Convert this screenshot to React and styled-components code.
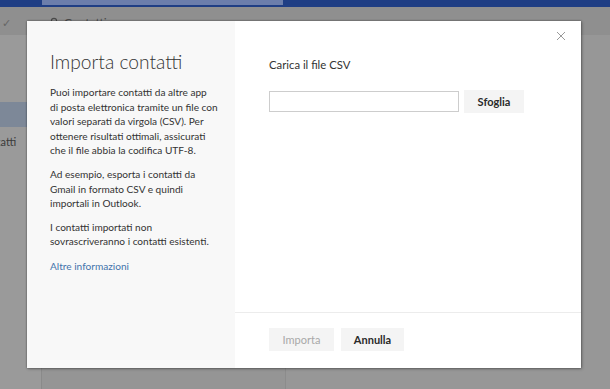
import styled, { createGlobalStyle } from "styled-components";

const GlobalStyle = createGlobalStyle`
  html, body {
    margin: 0;
    padding: 0;
    background-color: #989898;
  }

  body {
    font-family: Lato, "Open Sans", sans-serif;
    color: #333333;
  }
`;

const Page = styled.div`
  position: relative;
  width: 610px;
  height: 389px;
  overflow: hidden;
  display: flex;
  flex-direction: column;
  background-color: #989898;
`;

const TopBar = styled.div`
  height: 7px;
  flex-shrink: 0;
  background-color: #1f3e84;
  padding-left: 42px;
`;

const SearchStrip = styled.div`
  width: 241px;
  height: 5px;
  background-color: #6c7eab;
`;

const AppHeader = styled.div`
  height: 28px;
  flex-shrink: 0;
  display: flex;
  align-items: center;
  padding-top: 3px;
  box-sizing: border-box;
  background-color: #8f8f8f;
  color: #555555;
  font-size: 12px;
`;

const HeaderCheck = styled.span`
  width: 47px;
  padding-left: 2px;
  font-size: 11px;
  color: #666666;
`;

const HeaderTitle = styled.span`
  display: flex;
  align-items: center;
  gap: 5px;
  color: #4a4a4a;
`;

const Workspace = styled.div`
  flex: 1;
  display: flex;
`;

const Sidebar = styled.div`
  width: 41px;
  flex-shrink: 0;
  border-right: 1px solid #8a8a8a;
  background-color: #9a9a9a;
  padding-top: 67px;
  overflow: hidden;
`;

const SidebarItem = styled.div`
  height: 25px;
  margin-bottom: 2px;
  display: flex;
  align-items: center;
  background-color: ${(p) => (p.$active ? "#7d8898" : "transparent")};
  color: #3a3a3a;
  font-size: 11px;
  white-space: nowrap;
`;

const SidebarLabel = styled.span`
  margin-left: -23px;
`;

const ListColumn = styled.div`
  width: 243px;
  flex-shrink: 0;
  border-right: 1px solid #8c8c8c;
  background-color: #959595;
`;

const ReadingPane = styled.div`
  flex: 1;
  background-color: #979797;
`;

const Dialog = styled.div`
  position: absolute;
  left: 27px;
  top: 21px;
  width: 554px;
  height: 347px;
  display: grid;
  grid-template-columns: 208px 1fr;
  background-color: #ffffff;
  box-shadow: 0 0 2px rgba(0, 0, 0, 0.45), 1px 1px 3px rgba(0, 0, 0, 0.25);
`;

const InfoPanel = styled.div`
  background-color: #f8f8f8;
  padding: 28px 12px 0 23px;
`;

const Title = styled.h1`
  margin: 0 0 10px;
  font-size: 19.2px;
  font-weight: 300;
  line-height: 26px;
  color: #333333;
`;

const Paragraph = styled.p`
  margin: 0 0 9px;
  font-size: 10.1px;
  line-height: 14.6px;
  color: #333333;
`;

const MoreLink = styled.a`
  display: block;
  margin-top: 10px;
  font-size: 10.1px;
  line-height: 14.6px;
  color: #4373ab;
  text-decoration: none;
`;

const FormPanel = styled.div`
  position: relative;
  display: flex;
  flex-direction: column;
`;

const CloseButton = styled.button`
  position: absolute;
  top: 9px;
  right: 14px;
  width: 12px;
  height: 12px;
  padding: 0;
  border: none;
  background: none;
  display: flex;
  align-items: center;
  justify-content: center;
`;

const FormBody = styled.div`
  flex: 1;
  padding: 36px 0 0 34px;
`;

const FieldLabel = styled.div`
  font-size: 11.3px;
  line-height: 16px;
  color: #333333;
`;

const FileRow = styled.div`
  display: flex;
  align-items: center;
  gap: 5px;
  margin-top: 17px;
`;

const FileInput = styled.input`
  width: 190px;
  height: 21px;
  box-sizing: border-box;
  border: 1px solid #cdcdcd;
  background-color: #ffffff;
  outline: none;
`;

const Button = styled.button`
  height: ${(p) => p.$height || 23}px;
  width: ${(p) => p.$width}px;
  padding: 0;
  border: none;
  background-color: #f4f4f4;
  font-family: Lato, "Open Sans", sans-serif;
  font-size: 11px;
  font-weight: ${(p) => (p.disabled ? 400 : 700)};
  color: ${(p) => (p.disabled ? "#a8a8a8" : "#2a2a2a")};
`;

const Footer = styled.div`
  height: 56px;
  box-sizing: border-box;
  border-top: 1px solid #ececec;
  display: flex;
  align-items: flex-start;
  gap: 7px;
  padding: 15px 0 0 34px;
`;

const CloseIcon = () => (
  <svg width="10" height="10" viewBox="0 0 10 10">
    <path d="M1 1 L9 9 M9 1 L1 9" stroke="#9a9a9a" strokeWidth="1" />
  </svg>
);

const PersonIcon = () => (
  <svg width="10" height="12" viewBox="0 0 10 12">
    <circle cx="5" cy="4" r="2.6" fill="none" stroke="#4a4a4a" strokeWidth="1.1" />
    <path d="M0.8 11.5 C1.2 8.5 8.8 8.5 9.2 11.5" fill="none" stroke="#4a4a4a" strokeWidth="1.1" />
  </svg>
);

const App = () => {
  return (
    <Page>
      <GlobalStyle />
      <TopBar>
        <SearchStrip />
      </TopBar>
      <AppHeader>
        <HeaderCheck>✓</HeaderCheck>
        <HeaderTitle>
          <PersonIcon />
          <span>Contatti ⌄</span>
        </HeaderTitle>
      </AppHeader>
      <Workspace>
        <Sidebar>
          <SidebarItem $active />
          <SidebarItem>
            <SidebarLabel>Contatti</SidebarLabel>
          </SidebarItem>
        </Sidebar>
        <ListColumn />
        <ReadingPane />
      </Workspace>

      <Dialog role="dialog" aria-label="Importa contatti">
        <InfoPanel>
          <Title>Importa contatti</Title>
          <Paragraph>
            Puoi importare contatti da altre app
            <br />
            di posta elettronica tramite un file con
            <br />
            valori separati da virgola (CSV). Per
            <br />
            ottenere risultati ottimali, assicurati
            <br />
            che il file abbia la codifica UTF-8.
          </Paragraph>
          <Paragraph>
            Ad esempio, esporta i contatti da
            <br />
            Gmail in formato CSV e quindi
            <br />
            importali in Outlook.
          </Paragraph>
          <Paragraph>
            I contatti importati non
            <br />
            sovrascriveranno i contatti esistenti.
          </Paragraph>
          <MoreLink href="#">Altre informazioni</MoreLink>
        </InfoPanel>
        <FormPanel>
          <CloseButton aria-label="Chiudi">
            <CloseIcon />
          </CloseButton>
          <FormBody>
            <FieldLabel>Carica il file CSV</FieldLabel>
            <FileRow>
              <FileInput type="text" />
              <Button $width={60} $height={23}>
                Sfoglia
              </Button>
            </FileRow>
          </FormBody>
          <Footer>
            <Button $width={65} disabled>
              Importa
            </Button>
            <Button $width={63}>Annulla</Button>
          </Footer>
        </FormPanel>
      </Dialog>
    </Page>
  );
};

export default App;
